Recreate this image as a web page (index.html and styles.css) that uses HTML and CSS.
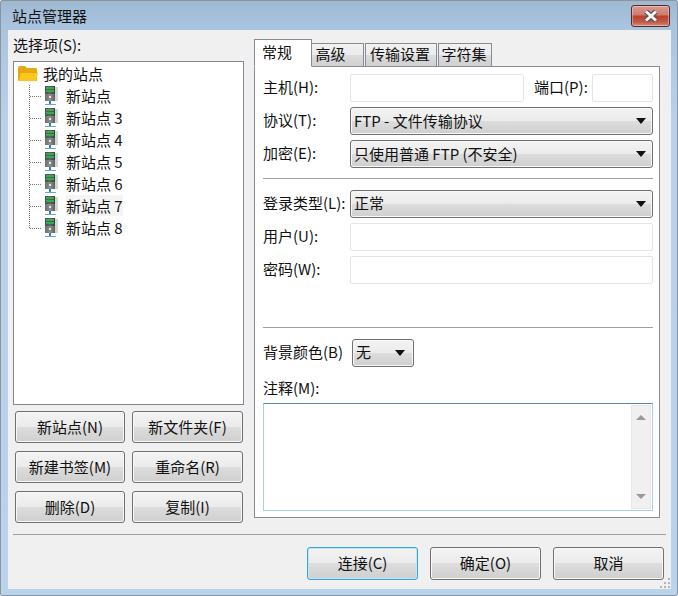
FILE: index.html
```html
<!DOCTYPE html>
<html lang="zh">
<head>
<meta charset="utf-8">
<title>站点管理器</title>
<link rel="stylesheet" href="styles.css">
</head>
<body>
<svg class="defs" width="0" height="0">
  <defs>
    <linearGradient id="case" x1="0" x2="1" y1="0" y2="0">
      <stop offset="0" stop-color="#4a4f4d"/>
      <stop offset=".5" stop-color="#5f6563"/>
      <stop offset="1" stop-color="#3b403e"/>
    </linearGradient>
    <linearGradient id="case-low" x1="0" x2="1" y1="0" y2="0">
      <stop offset="0" stop-color="#6b6f6e"/>
      <stop offset=".5" stop-color="#8c908f"/>
      <stop offset="1" stop-color="#5d6160"/>
    </linearGradient>
  </defs>
  <symbol id="server" viewBox="0 0 16 22">
    <rect x="4" y="2" width="11" height="14" fill="#d4d7d4"/>
    <rect x="2" y="1" width="10" height="15" fill="url(#case-low)"/>
    <rect x="2" y="1" width="10" height="8" fill="url(#case)"/>
    <rect x="3" y="2" width="8" height="2" fill="#2fae4a"/>
    <rect x="3" y="5" width="8" height="2" fill="#2fae4a"/>
    <rect x="6" y="11" width="2" height="2" fill="#e3e6e5"/>
    <rect x="6" y="16" width="2" height="3" fill="#2f7fd0"/>
    <rect x="2" y="19" width="11" height="1" fill="#6ea4dc"/>
  </symbol>
  <symbol id="folder" viewBox="0 0 20 16">
    <path d="M0 2 Q0 0 2 0 H7 L9 2 H18 Q19 2 19 4 V15 H1 Q0 15 0 14 Z" fill="#e6a80f"/>
    <path d="M1 15 L3 7 H20 L18 15 Z" fill="#fcc71d"/>
  </symbol>
  <symbol id="guide" viewBox="0 0 12 22">
    <path class="dots" d="M.5 0V22M1 11.500H12"/>
  </symbol>
  <symbol id="guide-end" viewBox="0 0 12 22">
    <path class="dots" d="M.5 0V11M1 11.500H12"/>
  </symbol>
</svg>

<div class="window">
  <div class="titlebar">
    <span class="title">站点管理器</span>
    <span class="close">
      <svg width="16" height="12" viewBox="0 0 16 12"><path class="close-o" d="M3 1.500L13 10.500M13 1.500L3 10.500"/><path class="close-i" d="M3 1.500L13 10.500M13 1.500L3 10.500"/></svg>
    </span>
  </div>
  <div class="client">
    <div class="columns">
      <div class="left">
        <div class="select-label">选择项(S):</div>
        <div class="tree">
          <div class="row root"><svg class="ico-folder"><use href="#folder"/></svg><span>我的站点</span></div>
          <div class="row"><svg class="guide"><use href="#guide"/></svg><svg class="ico-server"><use href="#server"/></svg><span>新站点</span></div>
          <div class="row"><svg class="guide"><use href="#guide"/></svg><svg class="ico-server"><use href="#server"/></svg><span>新站点 3</span></div>
          <div class="row"><svg class="guide"><use href="#guide"/></svg><svg class="ico-server"><use href="#server"/></svg><span>新站点 4</span></div>
          <div class="row"><svg class="guide"><use href="#guide"/></svg><svg class="ico-server"><use href="#server"/></svg><span>新站点 5</span></div>
          <div class="row"><svg class="guide"><use href="#guide"/></svg><svg class="ico-server"><use href="#server"/></svg><span>新站点 6</span></div>
          <div class="row"><svg class="guide"><use href="#guide"/></svg><svg class="ico-server"><use href="#server"/></svg><span class="hover">新站点 7</span></div>
          <div class="row"><svg class="guide"><use href="#guide-end"/></svg><svg class="ico-server"><use href="#server"/></svg><span>新站点 8</span></div>
        </div>
        <div class="actions">
          <button class="btn">新站点(N)</button>
          <button class="btn">新文件夹(F)</button>
          <button class="btn">新建书签(M)</button>
          <button class="btn">重命名(R)</button>
          <button class="btn">删除(D)</button>
          <button class="btn">复制(I)</button>
        </div>
      </div>
      <div class="right">
        <div class="tabs">
          <div class="tab active">常规</div>
          <div class="tab t2">高级</div>
          <div class="tab t3">传输设置</div>
          <div class="tab t4">字符集</div>
        </div>
        <div class="panel">
          <div class="form">
            <div class="field f-host">
              <label>主机(H):</label>
              <div class="input host"></div>
              <label class="port-label">端口(P):</label>
              <div class="input port"></div>
            </div>
            <div class="field f-proto">
              <label>协议(T):</label>
              <div class="combo"><span>FTP - 文件传输协议</span><i class="arrow"></i></div>
            </div>
            <div class="field f-enc">
              <label>加密(E):</label>
              <div class="combo"><span>只使用普通 FTP (不安全)</span><i class="arrow"></i></div>
            </div>
            <hr class="rule r1">
            <div class="field f-login">
              <label>登录类型(L):</label>
              <div class="combo"><span>正常</span><i class="arrow"></i></div>
            </div>
            <div class="field f-user">
              <label>用户(U):</label>
              <div class="input wide"></div>
            </div>
            <div class="field f-pass">
              <label>密码(W):</label>
              <div class="input wide"></div>
            </div>
            <hr class="rule r2">
            <div class="field f-bg">
              <label class="bg-label">背景颜色(B)</label>
              <div class="combo small"><span>无</span><i class="arrow"></i></div>
            </div>
            <div class="note-label">注释(M):</div>
            <div class="note">
              <div class="scrollbar"><i class="sb-up"></i><i class="sb-down"></i></div>
            </div>
          </div>
        </div>
      </div>
    </div>
    <hr class="sep">
    <div class="footer">
      <button class="btn big default">连接(C)</button>
      <button class="btn big">确定(O)</button>
      <button class="btn big">取消</button>
      <svg class="grip" width="11" height="11" viewBox="0 0 11 11"><path d="M8 0h2v2H8zM4 4h2v2H4zM8 4h2v2H8zM0 8h2v2H0zM4 8h2v2H4zM8 8h2v2H8z" fill="#b4b4b4"/></svg>
    </div>
  </div>
</div>
</body>
</html>
```
FILE: styles.css
```css
* { box-sizing: border-box; }
html, body { margin: 0; padding: 0; }
body {
  width: 678px;
  height: 596px;
  overflow: hidden;
  font-family: "Noto Sans CJK SC", "Open Sans", sans-serif;
  font-size: 15px;
  color: #111;
}
.defs { position: absolute; }
.dots { fill: none; stroke: #777; stroke-width: 1; stroke-dasharray: 1 1; }

.window {
  width: 678px;
  height: 596px;
  display: flex;
  flex-direction: column;
  border: 1px solid #8e9499;
  border-radius: 2px;
  background: linear-gradient(180deg, #9fb9d3 0, #a9c4df 25px, #b9d2ea 120px, #bad3ec 100%);
  padding: 0 6px 6px 7px;
}
.titlebar {
  height: 29px;
  flex: none;
  display: flex;
  justify-content: space-between;
  align-items: flex-start;
}
.title { margin: 4px 0 0 4px; line-height: 22px; color: #111; }
.close {
  width: 39px;
  height: 22px;
  margin: 4px 1px 0 0;
  border: 1px solid #4f2a2d;
  border-radius: 3px;
  box-shadow: inset 0 0 0 1px rgba(255,255,255,.35);
  background: linear-gradient(180deg, #d99a92 0, #cf7a6e 45%, #b8402c 50%, #c25a48 80%, #d48a7a 100%);
  display: flex;
  align-items: center;
  justify-content: center;
}
.close-o { fill: none; stroke: #4c4f55; stroke-width: 5; }
.close-i { fill: none; stroke: #f4f5f6; stroke-width: 3; }

.client {
  flex: 1;
  background: #f0f0f0;
  padding: 5px 5px 0 5px;
  display: flex;
  flex-direction: column;
}
.columns { display: flex; height: 488px; flex: none; }
.left { width: 231px; flex: none; }
.select-label { height: 26px; line-height: 19px; }
.tree {
  height: 344px;
  background: #fff;
  border: 1px solid #828790;
  padding: 1px 0 0 3px;
}
.row { display: flex; align-items: center; height: 22px; padding-left: 12px; }
.row span { white-space: nowrap; line-height: 21px; margin-bottom: 2px; }
.row.root { padding-left: 1px; }
.ico-folder { width: 20px; height: 16px; margin-right: 5px; margin-top: -1px; }
.guide { width: 12px; height: 22px; flex: none; }
.ico-server { width: 16px; height: 22px; flex: none; margin: 0 7px 0 2px; }
.row .hover { background: #f4f4f4; }

.actions {
  display: grid;
  grid-template-columns: 110px 111px;
  column-gap: 7px;
  row-gap: 8px;
  grid-auto-rows: 32px;
  margin: 6px 0 0 2px;
}
.btn {
  font: inherit;
  color: #111;
  padding: 0 0 2px;
  border: 1px solid #707070;
  border-radius: 3px;
  box-shadow: inset 0 0 0 1px #f8f8f8;
  background: linear-gradient(180deg, #f3f3f3 0, #ebebeb 50%, #dddddd 50%, #cfcfcf 100%);
  white-space: nowrap;
}
.right { margin-left: 10px; width: 406px; flex: none; display: flex; flex-direction: column; padding-top: 4px; }
.tabs { display: flex; height: 28px; align-items: flex-end; position: relative; z-index: 1; margin-bottom: -1px; }
.tab {
  height: 24px;
  border: 1px solid #898c95;
  border-left: 0;
  background: linear-gradient(180deg, #f2f2f2 0, #ebebeb 50%, #dddddd 50%, #cfcfcf 100%);
  line-height: 19px;
  text-align: center;
}
.tab.active {
  height: 28px;
  width: 58px;
  border-left: 1px solid #898c95;
  border-bottom-color: #fff;
  background: #fff;
  line-height: 24px;
  text-align: left;
  padding-left: 7px;
}
.t2 { width: 52px; padding-right: 14px; }
.t3 { width: 72px; margin-left: 1px; border-left: 1px solid #898c95; padding-right: 2px; }
.t4 { width: 54px; margin-left: 1px; border-left: 1px solid #898c95; padding-right: 2px; }
.panel {
  height: 452px;
  background: #fff;
  border: 1px solid #898c95;
  padding: 7px 6px 0 8px;
}
.form { display: flex; flex-direction: column; }
.field { display: flex; align-items: center; height: 28px; }
.field label { width: 87px; flex: none; white-space: nowrap; margin-bottom: 4px; }
.f-proto { margin-top: 5px; }
.f-enc { margin-top: 5px; }
.f-user, .f-pass { margin-top: 5px; }
.input { height: 28px; background: #fff; border: 1px solid #e3e4ea; border-radius: 2px; }
.host { width: 174px; flex: none; }
.field .port-label { width: 58px; margin-left: 10px; }
.port { width: 61px; flex: none; }
.wide { flex: 1; }
.combo {
  flex: 1;
  height: 28px;
  border: 1px solid #707070;
  border-radius: 3px;
  box-shadow: inset 0 0 0 1px #f8f8f8;
  background: linear-gradient(180deg, #f3f3f3 0, #ebebeb 50%, #dddddd 50%, #cfcfcf 100%);
  display: flex;
  align-items: center;
  justify-content: space-between;
  padding: 0 6px 0 3px;
}
.combo span { margin-bottom: 2px; }
.f-login .combo span, .f-bg .combo span { margin-bottom: 4px; }
.combo.small { flex: none; width: 62px; padding-right: 8px; }
.bg-label.bg-label { width: 89px; }
.arrow {
  width: 0;
  height: 0;
  border-left: 5px solid transparent;
  border-right: 5px solid transparent;
  border-top: 6px solid #111;
}
.rule { margin: 0; border: 0; height: 1px; background: #a0a0a0; }
.r1 { margin: 10px 0 11px; }
.r2 { margin: 43px 0 11px; }
.note-label { margin-top: 12px; height: 24px; line-height: 18px; }
.note {
  height: 108px;
  border: 1px solid #a9d0e6;
  border-top-color: #5a86a8;
  background: #fff;
  display: flex;
  justify-content: flex-end;
  padding: 1px;
}
.scrollbar {
  width: 20px;
  background: #f0f0f0;
  border: 1px solid #e8e8e8;
  display: flex;
  flex-direction: column;
  justify-content: space-between;
  align-items: center;
  padding: 9px 0 9px;
}
.sb-up { width: 0; height: 0; border: 5px solid transparent; border-top: 0; border-bottom: 5px solid #9a9a9a; }
.sb-down { width: 0; height: 0; border: 5px solid transparent; border-bottom: 0; border-top: 5px solid #9a9a9a; }

.sep { margin: 11px 0 12px; border: 0; height: 1px; background: #a0a0a0; }
.footer { display: flex; justify-content: flex-end; gap: 12px; padding-right: 2px; position: relative; }
.btn.big { width: 111px; height: 33px; }
.btn.default { border-color: #38a4d6; box-shadow: inset 0 0 0 1px #bfe6f6; }
.grip { position: absolute; right: -5px; bottom: -9px; }
```
